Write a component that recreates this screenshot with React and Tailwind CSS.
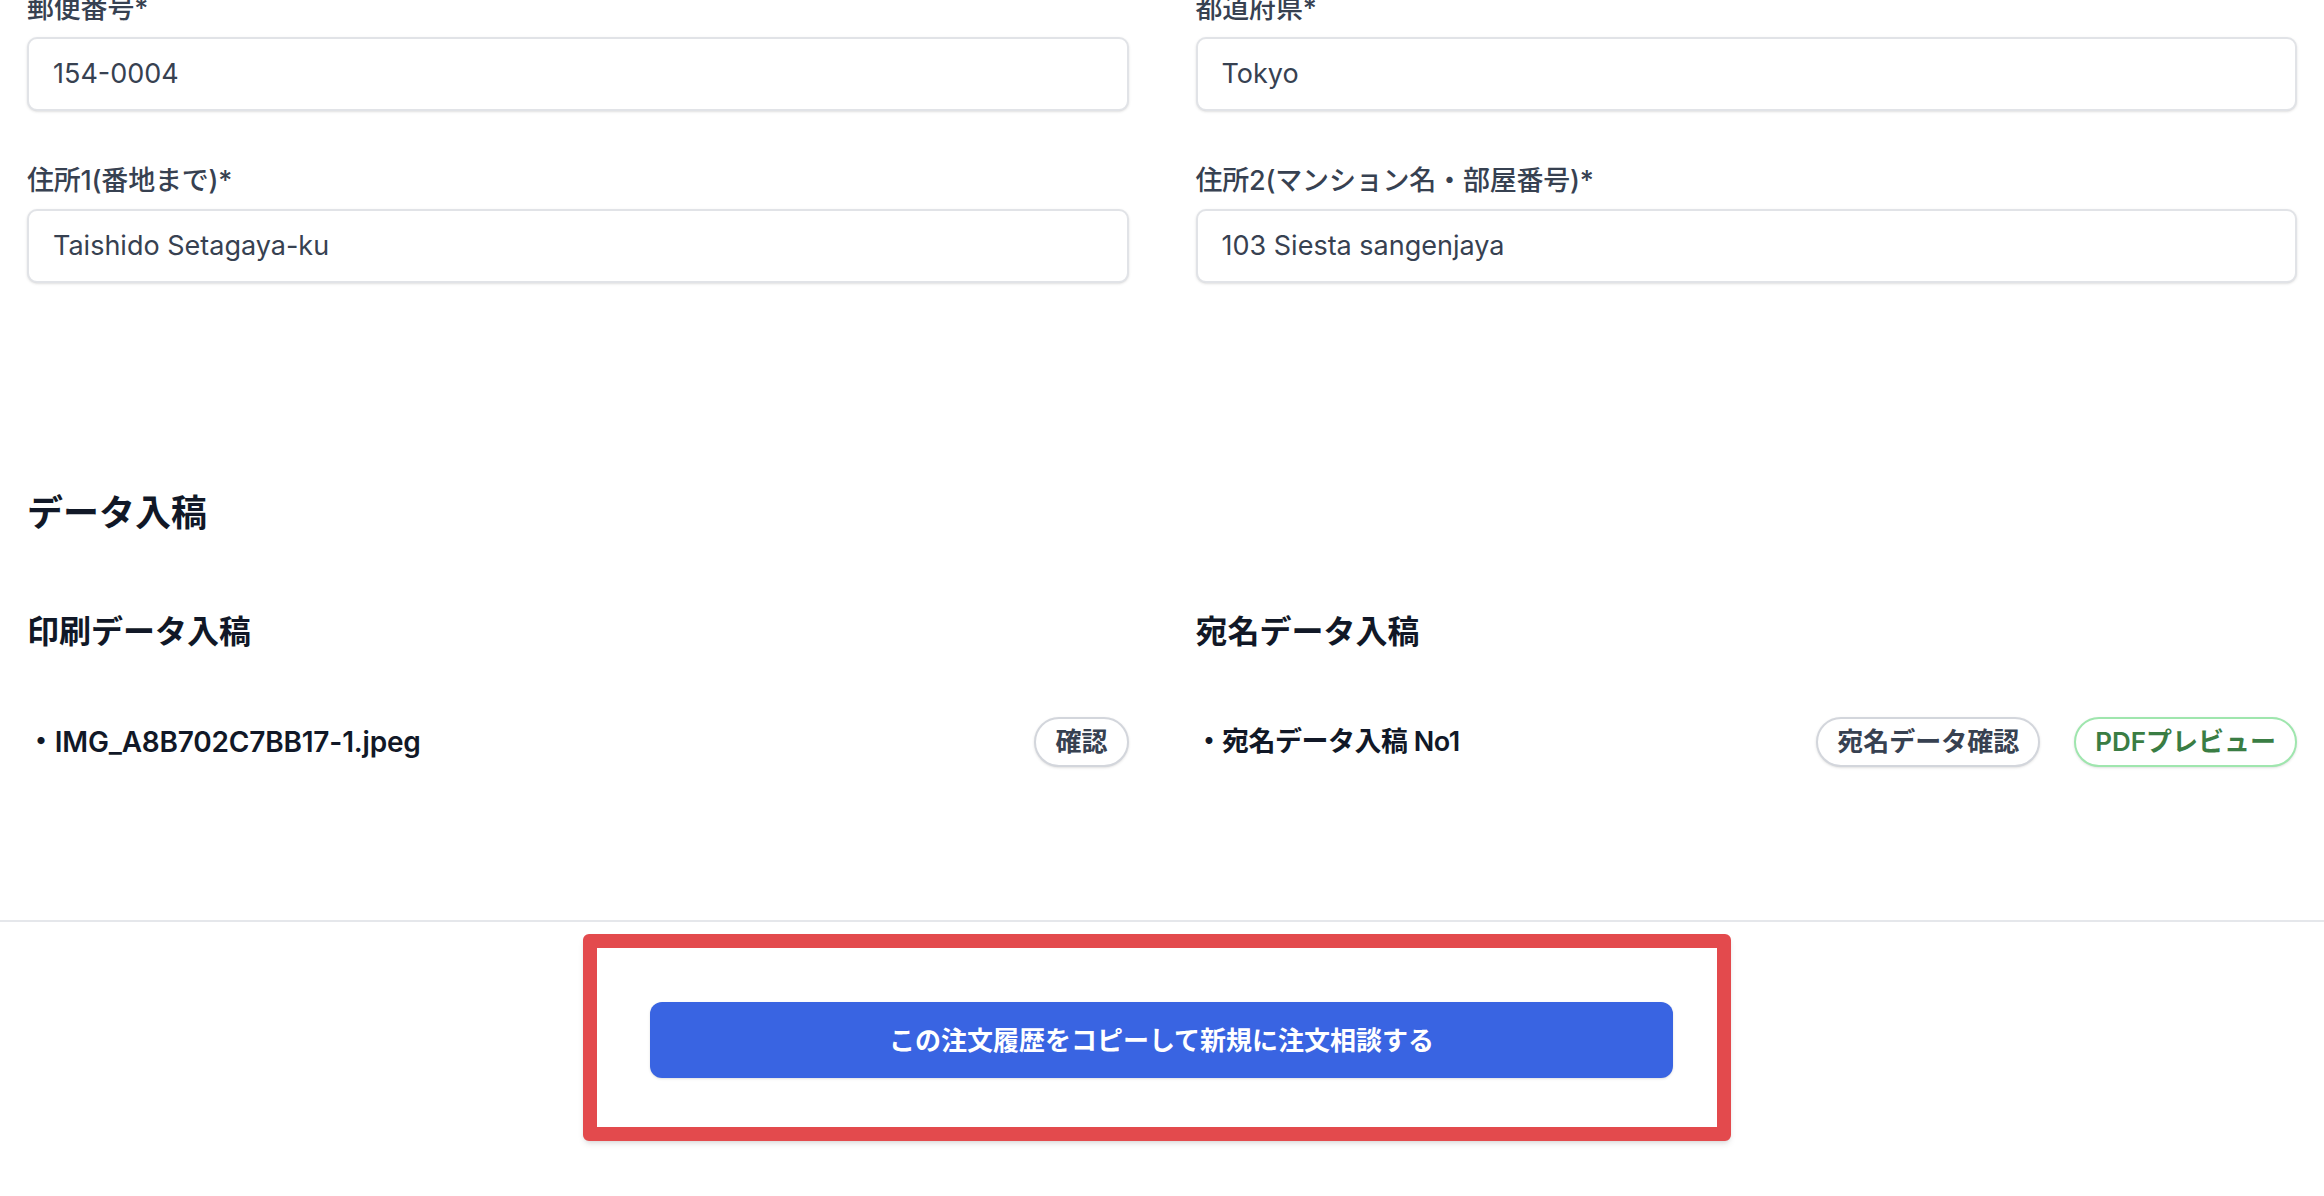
import React from "react";

const FONT = { fontFamily: '"Inter", "Noto Sans CJK JP", sans-serif' };

function Field({ label, value }) {
  return (
    <div className="flex flex-col">
      <label className="text-[27px] leading-[40px] font-medium text-[#374151] tracking-[-0.2px]">{label}</label>
      <div className="mt-[8px] h-[74px] rounded-[10px] border-2 border-[#e1e3e7] bg-white shadow-sm flex items-center px-[24px] text-[27px] text-[#374151]">
        {value}
      </div>
    </div>
  );
}

function Pill({ children, green }) {
  return (
    <button
      className={
        "h-[50px] rounded-full border-2 bg-white px-[19px] text-[26px] font-semibold leading-none shadow-sm flex items-center " +
        (green ? "border-[#9fe6ae] text-[#3a7d44]" : "border-[#d3d6dc] text-[#374151]")
      }
    >
      {children}
    </button>
  );
}

export default function App() {
  return (
    <div className="w-[2324px] h-[1196px] overflow-hidden bg-white" style={FONT}>
      <div className="px-[27px]">
        <div className="-mt-[11px] grid grid-cols-2 gap-x-[67px] gap-y-[50px]">
          <Field label="郵便番号*" value="154-0004" />
          <Field label="都道府県*" value="Tokyo" />
          <Field label="住所1(番地まで)*" value="Taishido Setagaya-ku" />
          <Field label="住所2(マンション名・部屋番号)*" value="103 Siesta sangenjaya" />
        </div>

        <h2 className="mt-[202px] text-[36px] leading-[56px] font-bold text-[#111827]">データ入稿</h2>

        <div className="mt-[67px] grid grid-cols-2 gap-x-[67px]">
          <div className="flex flex-col">
            <h3 className="text-[32px] leading-[48px] font-bold text-[#111827]">印刷データ入稿</h3>
            <div className="mt-[61px] flex items-center justify-between">
              <span className="text-[28px] font-semibold text-[#111827] tracking-[-0.2px]">・IMG_A8B702C7BB17-1.jpeg</span>
              <Pill>確認</Pill>
            </div>
          </div>
          <div className="flex flex-col">
            <h3 className="text-[32px] leading-[48px] font-bold text-[#111827]">宛名データ入稿</h3>
            <div className="mt-[61px] flex items-center justify-between">
              <span className="text-[27px] font-semibold text-[#111827] tracking-[-0.5px]">・宛名データ入稿 No1</span>
              <div className="flex items-center gap-[34px]">
                <Pill>宛名データ確認</Pill>
                <Pill green>PDFプレビュー</Pill>
              </div>
            </div>
          </div>
        </div>
      </div>

      <div className="mt-[153px] border-t-2 border-[#e5e7eb]" />

      <div className="mt-[12px] flex justify-center">
        <div className="mr-[10px] w-[1148px] rounded-[6px] border-[14px] border-[#e34a4d] bg-white shadow-md pt-[54px] pb-[49px] pl-[53px] pr-[44px]">
          <button className="w-[1023px] h-[76px] rounded-[12px] bg-[#3964e2] text-white text-[26px] font-bold shadow-sm flex items-center justify-center">
            この注文履歴をコピーして新規に注文相談する
          </button>
        </div>
      </div>
    </div>
  );
}
